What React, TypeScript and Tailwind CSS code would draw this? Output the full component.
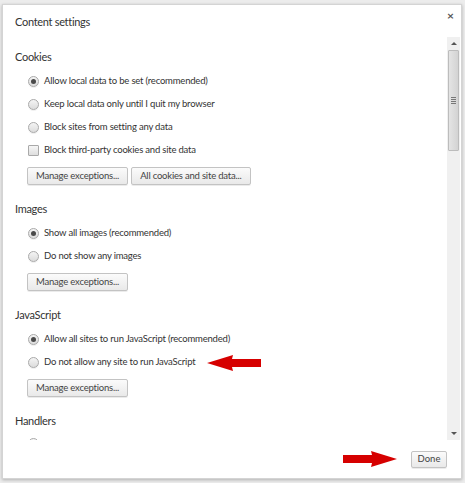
import React from "react";

function Radio({ checked }: { checked?: boolean }) {
  return (
    <span className="flex h-[11px] w-[11px] shrink-0 items-center justify-center rounded-full border border-[#a9a9a9] bg-gradient-to-b from-[#f4f4f4] to-[#dcdcdc] shadow-[0_1px_0_rgba(0,0,0,0.06)]">
      {checked && <span className="h-[5px] w-[5px] rounded-full bg-[#4a4a4a]" />}
    </span>
  );
}

function Check() {
  return (
    <span className="h-[11px] w-[11px] shrink-0 rounded-[1px] border border-[#a9a9a9] bg-gradient-to-b from-[#f6f6f6] to-[#dedede]" />
  );
}

function Btn({ children }: { children: React.ReactNode }) {
  return (
    <button className="flex h-[18px] items-center rounded-[2px] border border-[#c3c3c3] bg-gradient-to-b from-[#fbfbfb] to-[#e9e9e9] px-[8px] text-[9.5px] tracking-[-0.2px] text-[#444] shadow-[0_1px_0_rgba(0,0,0,0.08)]">
      {children}
    </button>
  );
}

function Arrow({ left }: { left?: boolean }) {
  return (
    <svg width="54" height="16" viewBox="0 0 54 16" className={left ? "" : "-scale-x-100"}>
      <path d="M0 8 L26 0 L25 4 L54 4 L54 12 L25 12 L26 16 Z" fill="#d60000" />
    </svg>
  );
}

function Row({ children, extra }: { children: React.ReactNode; extra?: React.ReactNode }) {
  return (
    <div className="flex h-[23px] items-center gap-[5px] pl-[13px]">
      {children}
      {extra}
    </div>
  );
}

function Heading({ children }: { children: React.ReactNode }) {
  return <div className="flex h-[25px] items-center text-[11px] tracking-[-0.3px] text-[#333]">{children}</div>;
}

export default function App() {
  return (
    <div
      className="flex h-[483px] w-[465px] bg-[#ececec] pb-[4px] pl-[2px] pr-[3px] pt-[4px]"
      style={{ fontFamily: 'Lato, "Open Sans", sans-serif' }}
    >
      <div className="flex flex-1 flex-col border border-[#d4d4d4] bg-white shadow-[0_1px_3px_rgba(0,0,0,0.25)]">
        <div className="flex h-[32px] shrink-0 items-start justify-between pl-[12px] pr-[7px]">
          <span className="mt-[9px] text-[11px] tracking-[-0.3px] text-[#333]">Content settings</span>
          <span className="mt-[2px] text-[12px] font-bold text-[#555]">×</span>
        </div>
        <div className="flex min-h-0 flex-1">
          <div className="flex-1 overflow-hidden pl-[12px] pt-[8px] text-[9.5px] tracking-[-0.2px] text-[#333]">
            <Heading>Cookies</Heading>
            <Row>
              <Radio checked />
              <span>Allow local data to be set (recommended)</span>
            </Row>
            <Row>
              <Radio />
              <span>Keep local data only until I quit my browser</span>
            </Row>
            <Row>
              <Radio />
              <span>Block sites from setting any data</span>
            </Row>
            <Row>
              <Check />
              <span>Block third-party cookies and site data</span>
            </Row>
            <div className="mt-[5px] flex gap-[3px] pl-[12px]">
              <Btn>Manage exceptions...</Btn>
              <Btn>All cookies and site data...</Btn>
            </div>

            <div className="mt-[12px]">
              <Heading>Images</Heading>
              <Row>
                <Radio checked />
                <span>Show all images (recommended)</span>
              </Row>
              <Row>
                <Radio />
                <span>Do not show any images</span>
              </Row>
              <div className="mt-[5px] flex pl-[12px]">
                <Btn>Manage exceptions...</Btn>
              </div>
            </div>

            <div className="mt-[12px]">
              <Heading>JavaScript</Heading>
              <Row>
                <Radio checked />
                <span>Allow all sites to run JavaScript (recommended)</span>
              </Row>
              <Row extra={<span className="ml-[7px] flex"><Arrow left /></span>}>
                <Radio />
                <span>Do not allow any site to run JavaScript</span>
              </Row>
              <div className="mt-[5px] flex pl-[12px]">
                <Btn>Manage exceptions...</Btn>
              </div>
            </div>

            <div className="mt-[12px]">
              <Heading>Handlers</Heading>
              <div className="flex h-[23px] items-start pl-[13px] pt-[4px]">
                <Radio />
              </div>
            </div>
          </div>
          <div className="mr-[1px] flex w-[13px] shrink-0 flex-col items-center bg-[#f0f0f0]">
            <div className="flex h-[13px] items-center justify-center">
              <span className="h-0 w-0 border-x-[3px] border-b-[3px] border-x-transparent border-b-[#555]" />
            </div>
            <div className="flex h-[101px] w-[11px] items-center justify-center rounded-[1px] border border-[#bcbcbc] bg-gradient-to-r from-[#e4e4e4] to-[#d3d3d3]">
              <div className="flex flex-col gap-[1px]">
                <span className="h-px w-[5px] bg-[#777]" />
                <span className="h-px w-[5px] bg-[#777]" />
                <span className="h-px w-[5px] bg-[#777]" />
                <span className="h-px w-[5px] bg-[#777]" />
              </div>
            </div>
            <div className="flex-1" />
            <div className="flex h-[13px] items-center justify-center">
              <span className="h-0 w-0 border-x-[3px] border-t-[3px] border-x-transparent border-t-[#555]" />
            </div>
          </div>
        </div>
        <div className="flex h-[38px] shrink-0 items-center justify-end gap-[14px] pr-[14px]">
          <Arrow />
          <button className="flex h-[17px] w-[36px] items-center justify-center rounded-[2px] border border-[#c3c3c3] bg-gradient-to-b from-[#fbfbfb] to-[#e9e9e9] text-[9.5px] text-[#444] shadow-[0_1px_0_rgba(0,0,0,0.08)]">
            Done
          </button>
        </div>
      </div>
    </div>
  );
}
